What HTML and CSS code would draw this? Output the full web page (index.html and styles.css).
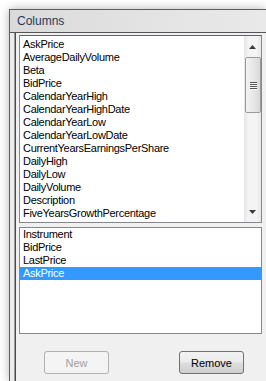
FILE: index.html
```html
<!DOCTYPE html>
<html>
<head>
<meta charset="utf-8">
<link rel="stylesheet" href="styles.css">
</head>
<body>
<div class="window">
  <div class="title">Columns</div>
  <div class="frame">
    <div class="side"></div>
    <div class="client">
      <div class="listbox available">
        <ul class="items">
          <li>AskPrice</li>
          <li>AverageDailyVolume</li>
          <li>Beta</li>
          <li>BidPrice</li>
          <li>CalendarYearHigh</li>
          <li>CalendarYearHighDate</li>
          <li>CalendarYearLow</li>
          <li>CalendarYearLowDate</li>
          <li>CurrentYearsEarningsPerShare</li>
          <li>DailyHigh</li>
          <li>DailyLow</li>
          <li>DailyVolume</li>
          <li>Description</li>
          <li>FiveYearsGrowthPercentage</li>
        </ul>
        <div class="scrollbar">
          <div class="sb-btn"><svg width="7" height="4" viewBox="0 0 7 4"><polygon points="0,4 3.5,0 7,4" fill="#3c3c3c"/></svg></div>
          <div class="sb-track">
            <div class="thumb">
              <div class="grip"><span></span><span></span><span></span><span></span></div>
            </div>
          </div>
          <div class="sb-btn"><svg width="7" height="4" viewBox="0 0 7 4"><polygon points="0,0 7,0 3.5,4" fill="#3c3c3c"/></svg></div>
        </div>
      </div>
      <div class="listbox chosen">
        <ul class="items">
          <li>Instrument</li>
          <li>BidPrice</li>
          <li>LastPrice</li>
          <li class="sel">AskPrice</li>
        </ul>
      </div>
      <div class="buttons">
        <button class="btn" disabled>New</button>
        <button class="btn">Remove</button>
      </div>
    </div>
  </div>
</div>
</body>
</html>
```
FILE: styles.css
```css
html, body {
  margin: 0;
  height: 100%;
  overflow: hidden;
  background: #ffffff;
}
body {
  padding: 9px 0 0 9px;
  box-sizing: border-box;
  font-family: "Liberation Sans", Arial, sans-serif;
}
.window {
  width: 257px;
  height: 372px;
  box-sizing: border-box;
  overflow: hidden;
  border-left: 1px solid #5e5e5e;
  border-top: 1px solid #5e5e5e;
  box-shadow: 0 0 9px rgba(0, 0, 0, 0.3);
  background: #ececec;
  display: flex;
  flex-direction: column;
}
.title {
  flex: none;
  height: 22px;
  line-height: 22px;
  padding-left: 7px;
  font-size: 12px;
  color: #1e395b;
  background: linear-gradient(100deg, #dadada, #e4e4e4 60%, #e9e9e9);
  border-bottom: 1px solid #555555;
}
.frame {
  flex: 1;
  display: flex;
  min-height: 0;
}
.side {
  width: 4px;
  background: #ebebeb;
  border-right: 1px solid #9b9b9b;
}
.client {
  flex: 1;
  min-width: 0;
  border-left: 1px solid #4a4a4a;
  background: #f0f0f0;
  padding: 2px 0 0 3px;
}
.listbox {
  width: 243px;
  box-sizing: border-box;
  border: 1px solid #828790;
  background: #ffffff;
  display: flex;
}
.available {
  height: 188px;
  border-top-color: #5f6168;
}
.chosen {
  height: 107px;
  margin-top: 4px;
}
.items {
  list-style: none;
  margin: 0;
  padding: 2px 0 0 0;
  flex: 1;
  font-size: 11px;
  line-height: 13px;
  letter-spacing: -0.3px;
  color: #000000;
  white-space: nowrap;
  overflow: hidden;
}
.chosen .items {
  padding-top: 0;
}
.items li {
  padding-left: 3px;
  height: 13px;
}
.items li.sel {
  background: #3399ff;
  color: #ffffff;
}
.scrollbar {
  width: 17px;
  display: flex;
  flex-direction: column;
  background: linear-gradient(90deg, #e4e4e4, #f4f4f4 25%, #f4f4f4 75%, #e6e6e6);
}
.sb-btn {
  height: 21px;
  display: flex;
  align-items: center;
  justify-content: center;
}
.sb-btn svg {
  display: block;
}
.sb-track {
  flex: 1;
  padding-left: 1px;
}
.thumb {
  height: 56px;
  box-sizing: border-box;
  border: 1px solid #9a9a9a;
  border-radius: 2px;
  background: linear-gradient(90deg, #f3f3f3, #e8e8e8 50%, #d9d9d9);
  display: flex;
  align-items: center;
  justify-content: center;
}
.grip {
  display: flex;
  flex-direction: column;
  gap: 1px;
}
.grip span {
  display: block;
  width: 7px;
  height: 1px;
  background: #555555;
  box-shadow: 0 1px 0 #fbfbfb;
}
.buttons {
  width: 243px;
  box-sizing: border-box;
  display: flex;
  justify-content: space-between;
  padding: 0 18px 0 25px;
  margin-top: 17px;
}
.btn {
  width: 65px;
  height: 23px;
  padding: 0;
  font-family: "Liberation Sans", Arial, sans-serif;
  font-size: 11px;
  color: #000000;
  border: 1px solid #707070;
  border-radius: 3px;
  background: linear-gradient(180deg, #f2f2f2, #ebebeb 48%, #dddddd 52%, #cfcfcf);
}
.btn:disabled {
  border-color: #adb2b5;
  background: #f4f4f4;
  color: #a0a0a0;
}
```
